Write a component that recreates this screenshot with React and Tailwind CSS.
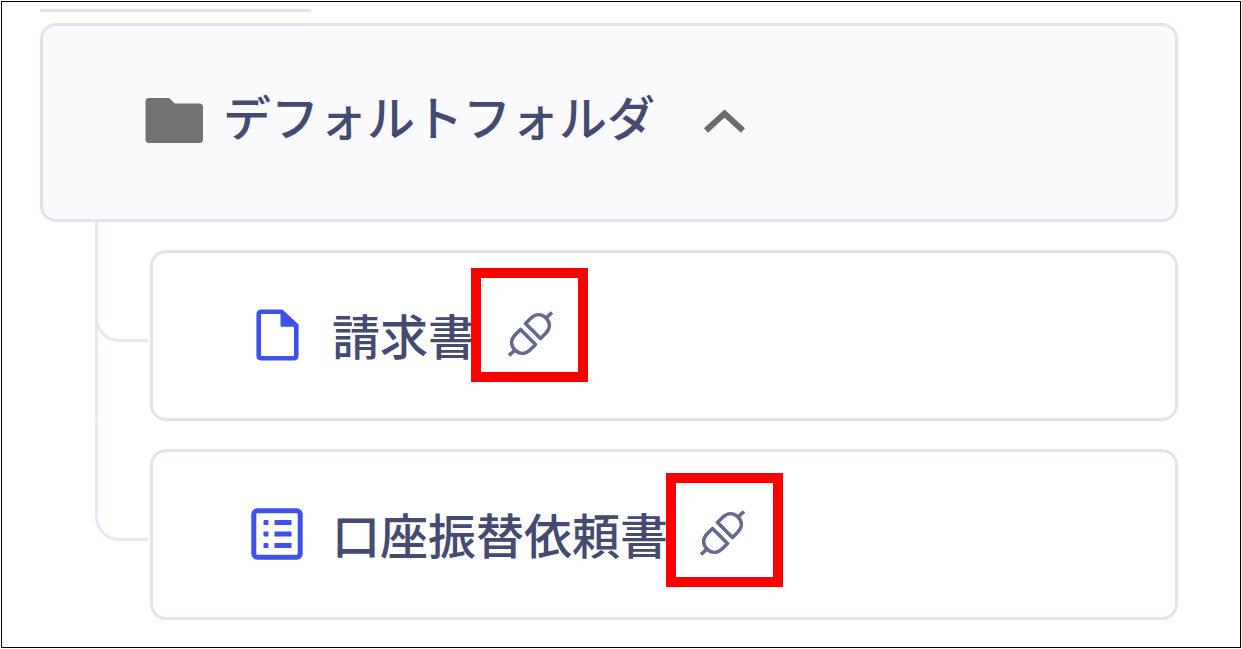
import { useState } from "react";

function FolderIcon() {
  return (
    <svg className="h-[46px] w-[58px] shrink-0" viewBox="0 0 58 46" fill="#727272" aria-hidden="true">
      <path d="M4 0H24L30 5.5H54.5Q58 5.5 58 9V41.5Q58 45 54.5 45H4Q0.5 45 0.5 41.5V3.5Q0.5 0 4 0Z" />
    </svg>
  );
}

function ChevronIcon({ open }) {
  return (
    <svg
      className={open ? "h-6 w-[42px] shrink-0" : "h-6 w-[42px] shrink-0 rotate-180"}
      viewBox="0 0 42 24"
      fill="none"
      stroke="#6b6b69"
      strokeWidth="6"
      aria-hidden="true"
    >
      <path d="M3 21.5L21.5 4.5L40 21.5" />
    </svg>
  );
}

function DocumentIcon() {
  return (
    <svg className="h-[52px] w-[52px] shrink-0" viewBox="0 0 52 52" aria-hidden="true">
      <path
        d="M9 2.7H30.5L45.3 16.5V46.5Q45.3 49.3 42.5 49.3H10.5Q7.7 49.3 7.7 46.5V5.5Q7.7 2.7 10.5 2.7"
        fill="none"
        stroke="#3f51ea"
        strokeWidth="4.6"
      />
      <path d="M29.5 1.5L46.5 17.8H31Q29.5 17.8 29.5 16.3Z" fill="#3f51ea" />
    </svg>
  );
}

function FormIcon() {
  return (
    <svg className="h-[52px] w-[52px] shrink-0" viewBox="0 0 52 52" fill="#3f51ea" aria-hidden="true">
      <rect x="2.8" y="2.8" width="46.4" height="46.4" rx="3.5" fill="none" stroke="#3f51ea" strokeWidth="5" />
      <rect x="12.5" y="12" width="5" height="5" rx="1" />
      <rect x="23.5" y="12" width="17" height="5" />
      <rect x="12.5" y="23.5" width="5" height="5" rx="1" />
      <rect x="23.5" y="23.5" width="17" height="5" />
      <rect x="12.5" y="35" width="5" height="5" rx="1" />
      <rect x="23.5" y="35" width="17" height="5" />
    </svg>
  );
}

function PlugIcon() {
  const half = "M17.5 12.5L22.5 7.5C27.5 2.5 33.5 2.5 38 7C42.5 11.5 42.5 17.5 37.5 22.5L32.5 27.5ZM38 7L44 1.5";
  return (
    <svg
      className="size-[46px]"
      viewBox="0 0 46 46"
      fill="none"
      stroke="#656a8c"
      strokeWidth="3.6"
      strokeLinejoin="round"
      role="img"
      aria-label="連携"
    >
      <path d={half} />
      <path d={half} transform="rotate(180 22.5 23)" />
    </svg>
  );
}

const items = [
  { name: "請求書", Icon: DocumentIcon, mark: "-left-[37px] -top-[43px]" },
  { name: "口座振替依頼書", Icon: FormIcon, mark: "-left-[34px] -top-[37px]" },
];

function Item({ item, last }) {
  const { name, Icon, mark } = item;
  return (
    <li className="flex">
      <div
        className={
          last
            ? "mr-[2px] flex w-[53px] shrink-0 flex-col"
            : "mr-[2px] flex w-[53px] shrink-0 flex-col border-l-3 border-[#e6e7f3]"
        }
      >
        <div
          className={
            last
              ? "mt-px h-[119px] rounded-bl-3xl border-b-3 border-l-3 border-[#e6e7f3]"
              : "-ml-[3px] h-[120px] rounded-bl-3xl border-b-3 border-l-3 border-[#e6e7f3]"
          }
        />
      </div>
      <div className="mt-7 flex h-[171px] grow items-center rounded-2xl border-3 border-[#e1e2ef] bg-white pl-[98px]">
        <div className="pb-[2px]">
          <Icon />
        </div>
        <span className="ml-[29px] pb-1 whitespace-nowrap">{name}</span>
        <div className="relative ml-8 mb-[3px]">
          <PlugIcon />
          <span className={`absolute h-[114px] w-[117px] border-10 border-[#ff0000] ${mark}`} />
        </div>
      </div>
    </li>
  );
}

export default function App() {
  const [open, setOpen] = useState(true);
  return (
    <main className="m-px border border-black bg-white pt-[7px] pr-[62px] pb-[27px] pl-[38px] font-['Noto_Sans_CJK_JP','Noto_Sans',sans-serif] text-[48px] leading-[60px] font-medium text-[#454a70]">
      <div className="h-[3px] w-[271px] bg-[#e1e2ef]" />
      <button
        type="button"
        aria-expanded={open}
        onClick={() => setOpen(!open)}
        className="mt-[11px] flex h-[199px] w-full items-center rounded-2xl border-3 border-[#e1e2ef] bg-[#fafafd] pb-1 pl-[102px] text-left"
      >
        <FolderIcon />
        <span className="ml-5 pb-3 whitespace-nowrap">デフォルトフォルダ</span>
        <span className="ml-12">
          <ChevronIcon open={open} />
        </span>
      </button>
      {open && (
        <ul className="ml-[55px]">
          {items.map((item, i) => (
            <Item key={item.name} item={item} last={i === items.length - 1} />
          ))}
        </ul>
      )}
    </main>
  );
}
